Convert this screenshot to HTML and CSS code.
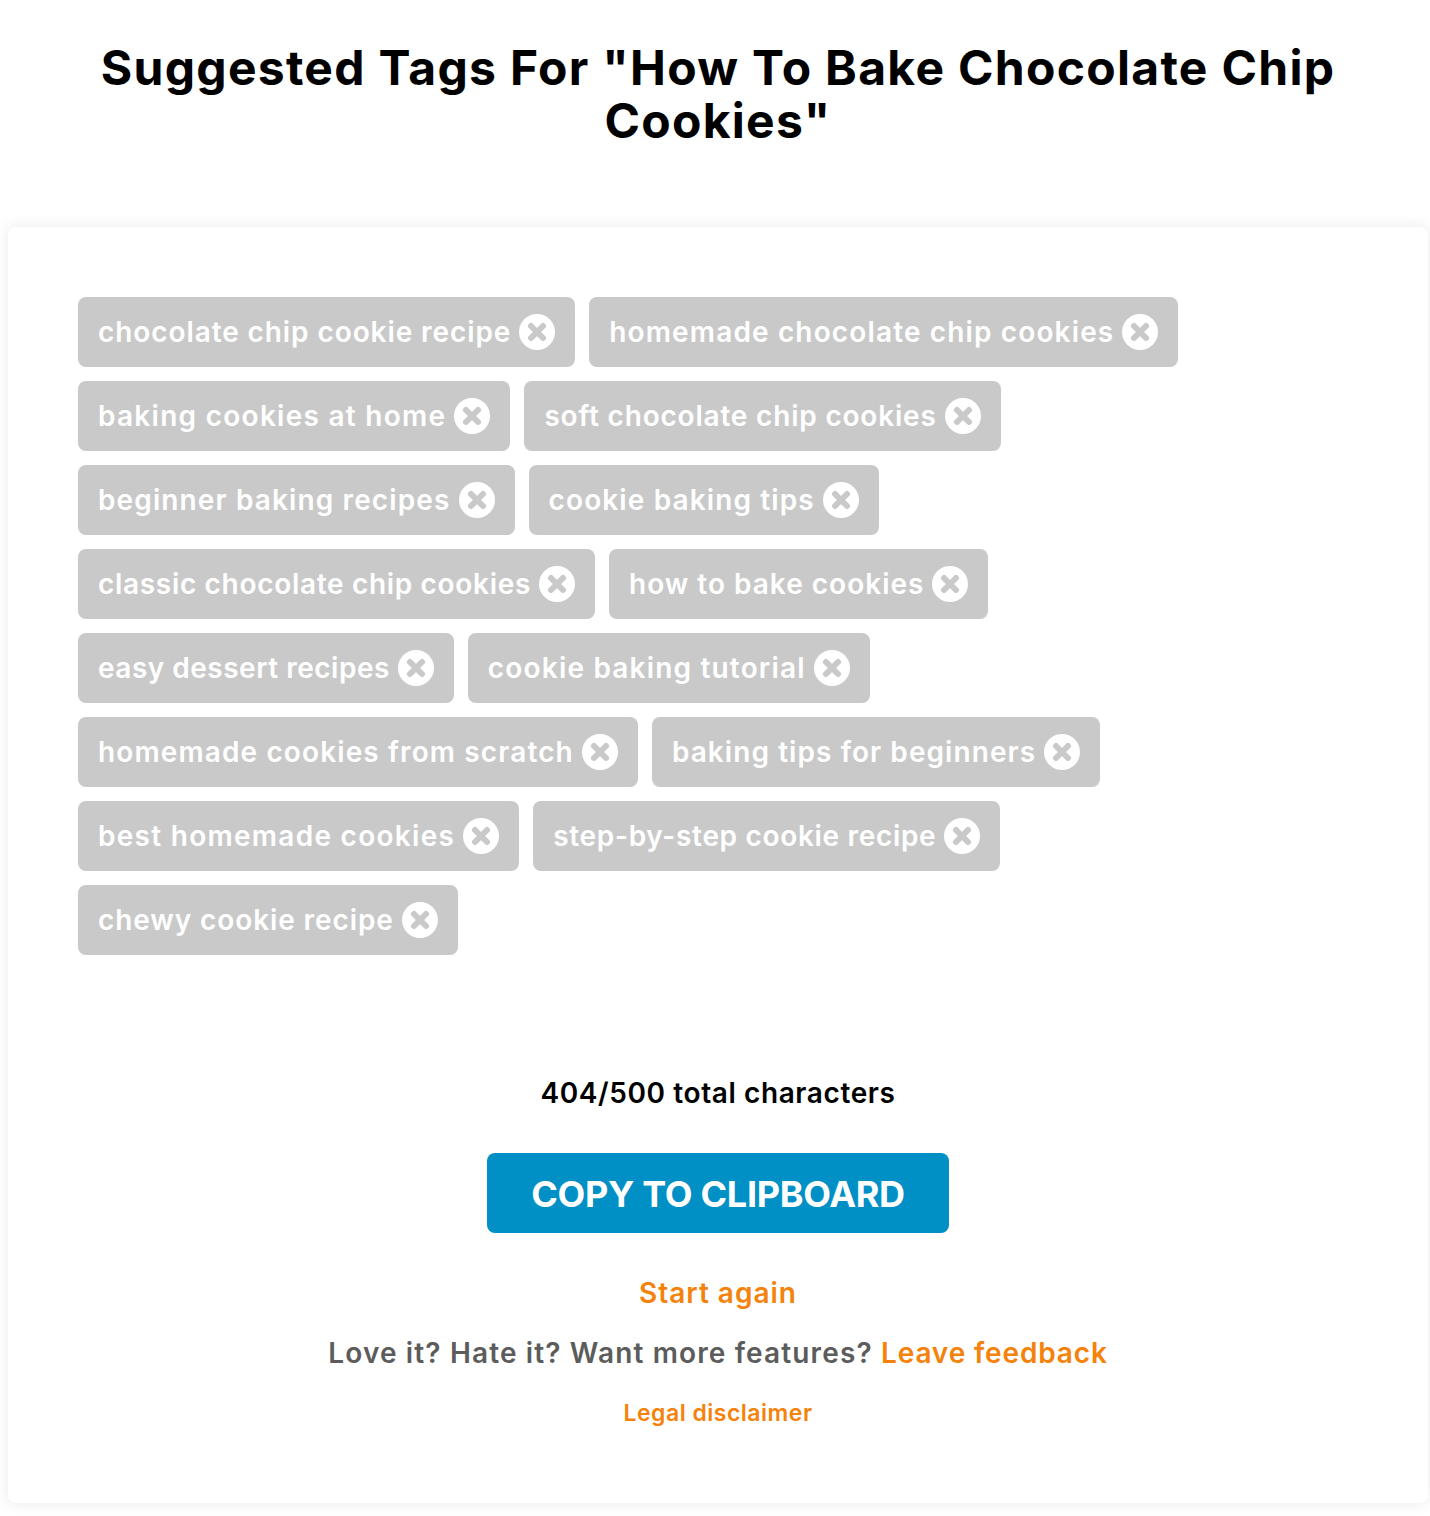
FILE: index.html
```html
<!DOCTYPE html>
<html lang="en">
<head>
	<meta charset="UTF-8">
	<meta name="viewport" content="width=device-width, initial-scale=1.0">
	<title>Suggested Tags</title>
	<link rel="stylesheet" href="styles.css">
</head>
<body>
	<svg class="defs" width="0" height="0">
		<symbol id="remove" viewBox="0 0 36 36">
			<circle cx="18" cy="18" r="18" fill="#fff"/>
			<path d="M12 12L24 24M24 12L12 24" stroke="#c9c9c9" stroke-width="6" stroke-linecap="round"/>
		</symbol>
	</svg>
	<h1 class="title">Suggested Tags For "How To Bake Chocolate Chip Cookies"</h1>
	<div class="card">
		<div class="tags">
			<div class="tag" style="letter-spacing:0.91px"><span>chocolate chip cookie recipe</span><svg class="tag-x"><use href="#remove"/></svg></div>
			<div class="tag" style="letter-spacing:1.14px"><span>homemade chocolate chip cookies</span><svg class="tag-x"><use href="#remove"/></svg></div>
			<div class="tag" style="letter-spacing:1.27px"><span>baking cookies at home</span><svg class="tag-x"><use href="#remove"/></svg></div>
			<div class="tag" style="letter-spacing:0.80px"><span>soft chocolate chip cookies</span><svg class="tag-x"><use href="#remove"/></svg></div>
			<div class="tag" style="letter-spacing:1.12px"><span>beginner baking recipes</span><svg class="tag-x"><use href="#remove"/></svg></div>
			<div class="tag" style="letter-spacing:1.12px"><span>cookie baking tips</span><svg class="tag-x"><use href="#remove"/></svg></div>
			<div class="tag" style="letter-spacing:0.68px"><span>classic chocolate chip cookies</span><svg class="tag-x"><use href="#remove"/></svg></div>
			<div class="tag" style="letter-spacing:1.00px"><span>how to bake cookies</span><svg class="tag-x"><use href="#remove"/></svg></div>
			<div class="tag" style="letter-spacing:0.50px"><span>easy dessert recipes</span><svg class="tag-x"><use href="#remove"/></svg></div>
			<div class="tag" style="letter-spacing:1.18px"><span>cookie baking tutorial</span><svg class="tag-x"><use href="#remove"/></svg></div>
			<div class="tag" style="letter-spacing:1.12px"><span>homemade cookies from scratch</span><svg class="tag-x"><use href="#remove"/></svg></div>
			<div class="tag" style="letter-spacing:1.07px"><span>baking tips for beginners</span><svg class="tag-x"><use href="#remove"/></svg></div>
			<div class="tag" style="letter-spacing:1.28px"><span>best homemade cookies</span><svg class="tag-x"><use href="#remove"/></svg></div>
			<div class="tag" style="letter-spacing:0.68px"><span>step-by-step cookie recipe</span><svg class="tag-x"><use href="#remove"/></svg></div>
			<div class="tag" style="letter-spacing:0.90px"><span>chewy cookie recipe</span><svg class="tag-x"><use href="#remove"/></svg></div>
		</div>
		<div class="footer">
			<p class="count">404/500 total characters</p>
			<button class="copy-btn">COPY TO CLIPBOARD</button>
			<a class="again" href="#">Start again</a>
			<p class="feedback">Love it? Hate it? Want more features? <a href="#">Leave feedback</a></p>
			<a class="legal" href="#">Legal disclaimer</a>
		</div>
	</div>
</body>
</html>
```

FILE: styles.css
```css
* {
	box-sizing: border-box;
}
body {
	margin: 0;
	padding: 0 2px 13px 8px;
	background: #fff;
	font-family: "Inter", "Liberation Sans", sans-serif;
}
.defs {
	position: absolute;
}
.title {
	margin: 0;
	padding: 41px 80px 0;
	height: 227px;
	font-size: 48px;
	line-height: 53px;
	font-weight: 700;
	letter-spacing: 1.3px;
	text-align: center;
	color: #000;
}
.card {
	height: 1276px;
	padding: 70px 70px 0;
	background: #fff;
	border-radius: 8px;
	box-shadow: 0 0 16px rgba(0, 0, 0, 0.09);
}
.tags {
	display: flex;
	flex-wrap: wrap;
	align-content: flex-start;
	gap: 14px;
	height: 776px;
	padding-right: 100px;
}
.tag {
	display: flex;
	align-items: center;
	gap: 8px;
	height: 70px;
	padding: 0 20px;
	border-radius: 8px;
	background: #c9c9c9;
	color: #fff;
	font-size: 28px;
	font-weight: 600;
	white-space: nowrap;
}
.tag-x {
	flex: none;
	width: 36px;
	height: 36px;
}
.footer {
	display: flex;
	flex-direction: column;
	align-items: center;
}
.count {
	margin: 0 0 40px;
	font-size: 28px;
	line-height: 40px;
	font-weight: 600;
	letter-spacing: 0.6px;
	color: #000;
}
.copy-btn {
	width: 462px;
	height: 80px;
	margin-bottom: 40px;
	padding: 2px 0 0;
	border: none;
	border-radius: 8px;
	background: #0090c6;
	color: #fff;
	font-family: "Inter", "Liberation Sans", sans-serif;
	font-size: 36px;
	font-weight: 700;
	letter-spacing: -0.3px;
}
.again {
	margin-bottom: 20px;
	font-size: 28px;
	line-height: 40px;
	font-weight: 600;
	letter-spacing: 1px;
	color: #f5820b;
	text-decoration: none;
}
.feedback {
	margin: 0 0 20px;
	font-size: 28px;
	line-height: 40px;
	font-weight: 600;
	letter-spacing: 1.14px;
	color: #5c5c5c;
}
.feedback a {
	letter-spacing: 0.86px;
	color: #f5820b;
	text-decoration: none;
}
.legal {
	font-size: 23px;
	line-height: 40px;
	font-weight: 600;
	letter-spacing: 0.5px;
	color: #f5820b;
	text-decoration: none;
}
```
